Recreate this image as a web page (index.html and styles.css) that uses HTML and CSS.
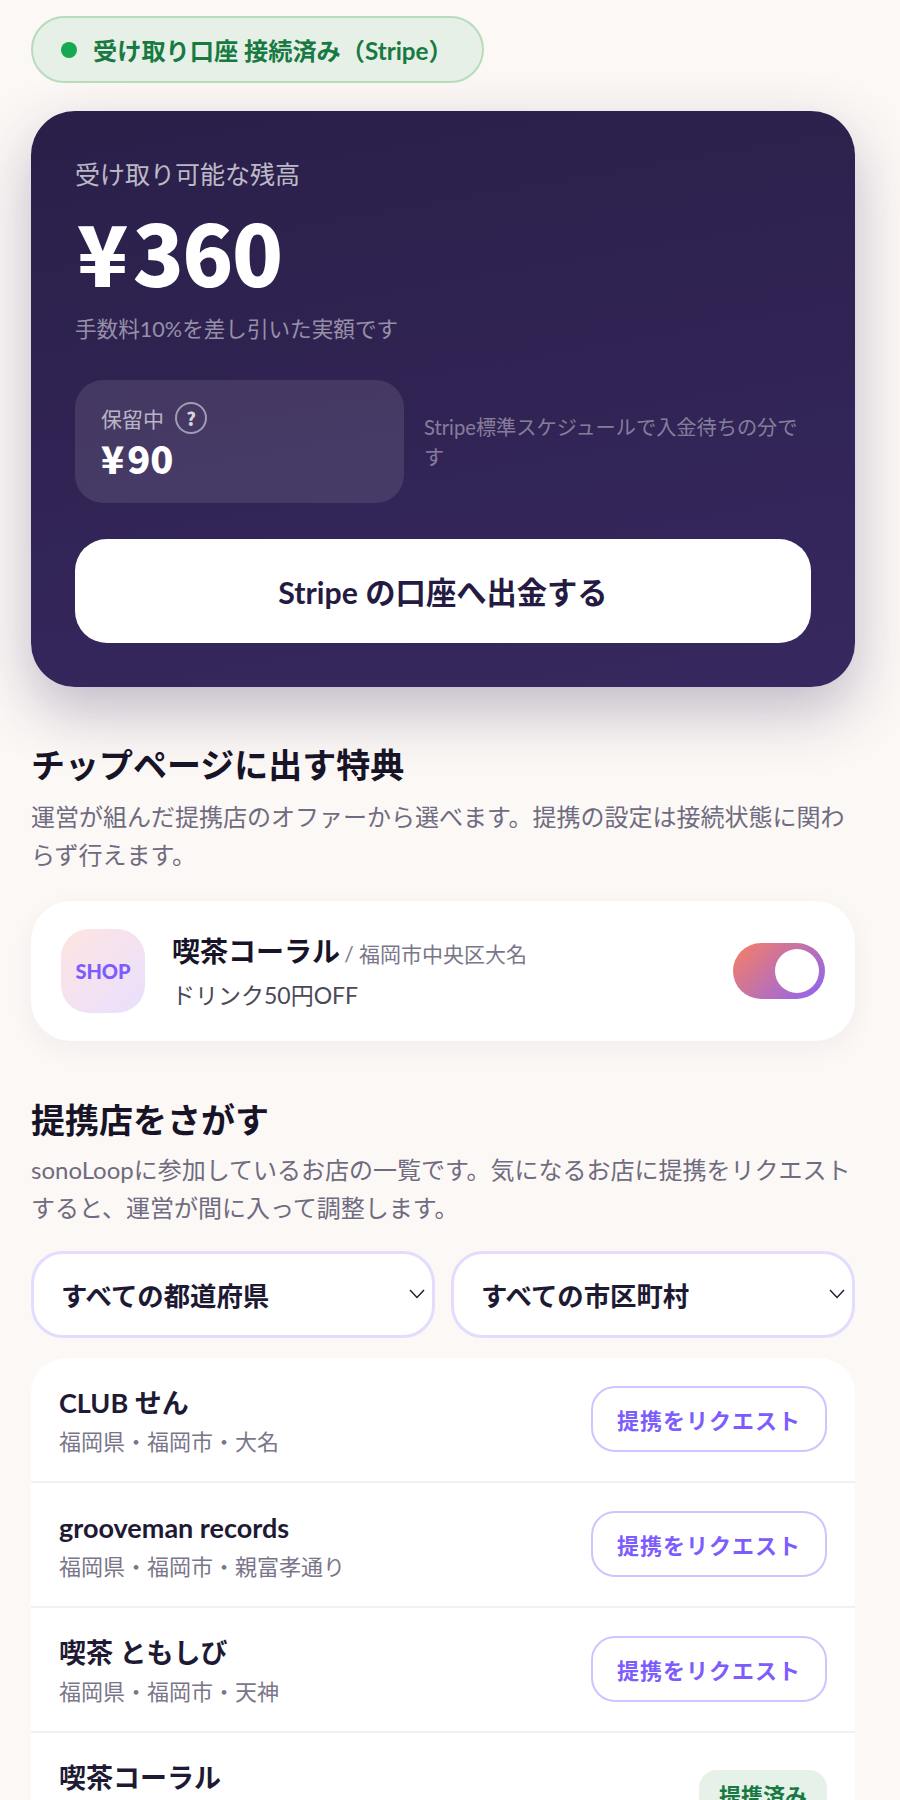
FILE: index.html
```html
<!DOCTYPE html>
<html lang="ja">
  <head>
    <meta charset="UTF-8" />
    <meta name="viewport" content="width=device-width, initial-scale=1.0" />
    <title>sonoLoop</title>
    <link rel="stylesheet" href="styles.css">
  </head>
  <body>
    <main class="page">
      <!-- Connection status -->
      <div class="status-pill">
        <span class="status-dot"></span>
        <span>受け取り口座 接続済み（Stripe）</span>
      </div>

      <!-- Balance card -->
      <section class="balance-card">
        <p class="balance-label">受け取り可能な残高</p>
        <p class="balance-amount"><span class="yen">¥</span>360</p>
        <p class="balance-note">手数料10%を差し引いた実額です</p>
        <div class="pending-row">
          <div class="pending-box">
            <div class="pending-label">
              <span>保留中</span>
              <span class="help-icon">?</span>
            </div>
            <p class="pending-amount"><span class="yen">¥</span>90</p>
          </div>
          <p class="pending-note">Stripe標準スケジュールで入金待ちの分です</p>
        </div>
        <button class="payout-btn">Stripe の口座へ出金する</button>
      </section>

      <!-- Perks -->
      <section class="perks">
        <h2>チップページに出す特典</h2>
        <p class="section-desc">運営が組んだ提携店のオファーから選べます。提携の設定は接続状態に関わらず行えます。</p>
        <div class="offer-card">
          <div class="shop-thumb">SHOP</div>
          <div class="offer-body">
            <p class="offer-title"><strong>喫茶コーラル</strong> <span>/ 福岡市中央区大名</span></p>
            <p class="offer-desc">ドリンク50円OFF</p>
          </div>
          <div class="toggle"><span class="toggle-knob"></span></div>
        </div>
      </section>

      <!-- Partner search -->
      <section class="partners">
        <h2>提携店をさがす</h2>
        <p class="section-desc">sonoLoopに参加しているお店の一覧です。気になるお店に提携をリクエストすると、運営が間に入って調整します。</p>
        <div class="filters">
          <div class="select-box">
            <span>すべての都道府県</span>
            <svg class="chevron" viewBox="0 0 16 10"><path d="M1 1l7 7.5L15 1" /></svg>
          </div>
          <div class="select-box">
            <span>すべての市区町村</span>
            <svg class="chevron" viewBox="0 0 16 10"><path d="M1 1l7 7.5L15 1" /></svg>
          </div>
        </div>
        <div class="shop-list">
          <div class="shop-row">
            <div class="shop-info">
              <p class="shop-name">CLUB せん</p>
              <p class="shop-area">福岡県・福岡市・大名</p>
            </div>
            <button class="request-btn">提携をリクエスト</button>
          </div>
          <div class="shop-row">
            <div class="shop-info">
              <p class="shop-name">grooveman records</p>
              <p class="shop-area">福岡県・福岡市・親富孝通り</p>
            </div>
            <button class="request-btn">提携をリクエスト</button>
          </div>
          <div class="shop-row">
            <div class="shop-info">
              <p class="shop-name">喫茶 ともしび</p>
              <p class="shop-area">福岡県・福岡市・天神</p>
            </div>
            <button class="request-btn">提携をリクエスト</button>
          </div>
          <div class="shop-row">
            <div class="shop-info">
              <p class="shop-name">喫茶コーラル</p>
              <p class="shop-area">福岡県・福岡市・大名</p>
            </div>
            <span class="linked-badge">提携済み</span>
          </div>
        </div>
      </section>
    </main>
  </body>
</html>
```

FILE: styles.css
```css
* {
  margin: 0;
  padding: 0;
  box-sizing: border-box;
}

html,
body {
  height: 100%;
  overflow: hidden;
}

body {
  background: #fcf8f5;
  color: #1e1a33;
  font-family: Lato, "Noto Sans CJK JP", sans-serif;
}

.page {
  padding: 16px 45px 0 31px;
}

/* status pill */
.status-pill {
  display: inline-flex;
  align-items: center;
  gap: 16px;
  width: 453px;
  height: 67px;
  padding: 0 28px;
  background: #e6f0e7;
  border: 2px solid #b6dcbc;
  border-radius: 34px;
  color: #187a42;
  font-size: 24.2px;
  font-weight: 700;
  white-space: nowrap;
}

.status-dot {
  flex: none;
  width: 16px;
  height: 16px;
  border-radius: 50%;
  background: #16a951;
}

/* balance card */
.balance-card {
  margin-top: 28px;
  padding: 44px;
  border-radius: 44px;
  background: linear-gradient(170deg, #2a1f49, #37285f);
  box-shadow: 0 24px 60px rgba(55, 40, 95, 0.3);
  color: #fff;
}

.balance-label {
  margin-top: 1px;
  font-size: 25px;
  line-height: 36px;
  color: rgba(255, 255, 255, 0.7);
}

.balance-amount {
  margin-top: 11px;
  margin-left: 2px;
  font-family: "Noto Sans CJK JP", sans-serif;
  font-size: 84px;
  line-height: 96px;
  font-weight: 900;
  letter-spacing: -1.5px;
}

.yen {
  margin-right: 6px;
}

.balance-note {
  margin-top: 14px;
  font-size: 21.6px;
  line-height: 32px;
  color: rgba(255, 255, 255, 0.5);
}

.pending-row {
  display: flex;
  align-items: center;
  gap: 20px;
  margin-top: 35px;
}

.pending-box {
  flex: 0 0 329px;
  height: 123px;
  padding: 22px 26px;
  border-radius: 28px;
  background: rgba(255, 255, 255, 0.1);
}

.pending-label {
  display: flex;
  align-items: center;
  gap: 11px;
  font-size: 21px;
  color: rgba(255, 255, 255, 0.65);
}

.help-icon {
  display: flex;
  align-items: center;
  justify-content: center;
  width: 32px;
  height: 32px;
  border: 2px solid rgba(255, 255, 255, 0.5);
  border-radius: 50%;
  color: rgba(255, 255, 255, 0.8);
  font-family: "Noto Sans CJK JP", sans-serif;
  font-size: 18px;
  font-weight: 900;
}

.pending-amount {
  margin-top: 2px;
  font-family: "Noto Sans CJK JP", sans-serif;
  font-size: 38px;
  line-height: 44px;
  font-weight: 900;
}

.pending-amount .yen {
  margin-right: 3px;
}

.pending-note {
  flex: 1;
  font-size: 20.2px;
  line-height: 30px;
  color: rgba(255, 255, 255, 0.42);
}

.payout-btn {
  display: block;
  width: 100%;
  height: 104px;
  margin-top: 36px;
  border: none;
  border-radius: 32px;
  background: #fff;
  color: #251b42;
  font-family: inherit;
  font-size: 30.3px;
  font-weight: 700;
}

/* sections */
h2 {
  font-size: 34px;
  line-height: 46px;
  font-weight: 700;
  color: #171428;
}

.section-desc {
  margin-top: 10px;
  font-size: 24px;
  line-height: 38.4px;
  color: #6f6b80;
}

.perks {
  margin-top: 55px;
}

.partners {
  margin-top: 56px;
}

.partners .section-desc {
  margin-top: 8px;
}

/* offer card */
.offer-card {
  display: flex;
  align-items: center;
  margin-top: 26px;
  height: 140px;
  padding: 0 30px;
  background: #fff;
  border-radius: 40px;
  box-shadow: 0 8px 24px rgba(55, 40, 95, 0.05);
}

.shop-thumb {
  display: flex;
  align-items: center;
  justify-content: center;
  flex: 0 0 84px;
  height: 84px;
  border-radius: 28px;
  background: linear-gradient(135deg, #ffe4e1, #e8e0ff);
  color: #7c5cfc;
  font-size: 20px;
  font-weight: 900;
}

.offer-body {
  flex: 1;
  margin-left: 27px;
}

.offer-title strong {
  font-size: 28px;
  font-weight: 700;
  color: #171428;
}

.offer-title span {
  font-size: 21px;
  color: #7a7689;
}

.offer-desc {
  margin-top: 7px;
  font-size: 23px;
  color: #4c4858;
}

.toggle {
  display: flex;
  align-items: center;
  justify-content: flex-end;
  width: 92px;
  height: 56px;
  padding-right: 6px;
  border-radius: 28px;
  background: linear-gradient(135deg, #f97f62, #8a64f5);
}

.toggle-knob {
  width: 44px;
  height: 44px;
  border-radius: 50%;
  background: #fff;
}

/* filters */
.filters {
  display: grid;
  grid-template-columns: 1fr 1fr;
  gap: 16px;
  margin-top: 23px;
}

.select-box {
  position: relative;
  display: flex;
  align-items: center;
  height: 87px;
  padding-left: 27px;
  background: #fff;
  border: 3px solid #e3dcff;
  border-radius: 32px;
  font-size: 26.4px;
  font-weight: 700;
  color: #1e1a33;
}

.chevron {
  position: absolute;
  top: 35px;
  right: 7px;
  width: 16px;
  height: 10px;
  fill: none;
  stroke: #1e1a33;
  stroke-width: 1.4;
}

/* shop list */
.shop-list {
  margin-top: 20px;
  background: #fff;
  border-radius: 36px 36px 0 0;
}

.shop-row {
  display: flex;
  align-items: center;
  justify-content: space-between;
  height: 125px;
  padding: 0 28px;
  border-bottom: 2px solid #f2f0f2;
}

.shop-info {
  padding-top: 4px;
}

.shop-name {
  font-size: 27px;
  line-height: 36px;
  font-weight: 700;
  color: #1e1a33;
}

.shop-area {
  margin-top: 5px;
  font-size: 22px;
  line-height: 32px;
  color: #7a7689;
}

.request-btn {
  width: 236px;
  height: 66px;
  border: 2.5px solid #cfc4ff;
  border-radius: 24px;
  background: #fff;
  color: #7c5cfc;
  font-family: inherit;
  font-size: 22px;
  font-weight: 700;
  letter-spacing: 1px;
}

.linked-badge {
  display: flex;
  align-items: center;
  justify-content: center;
  width: 128px;
  height: 48px;
  border-radius: 18px;
  background: #e6f2e9;
  color: #187a42;
  font-size: 22px;
  font-weight: 700;
}
```
